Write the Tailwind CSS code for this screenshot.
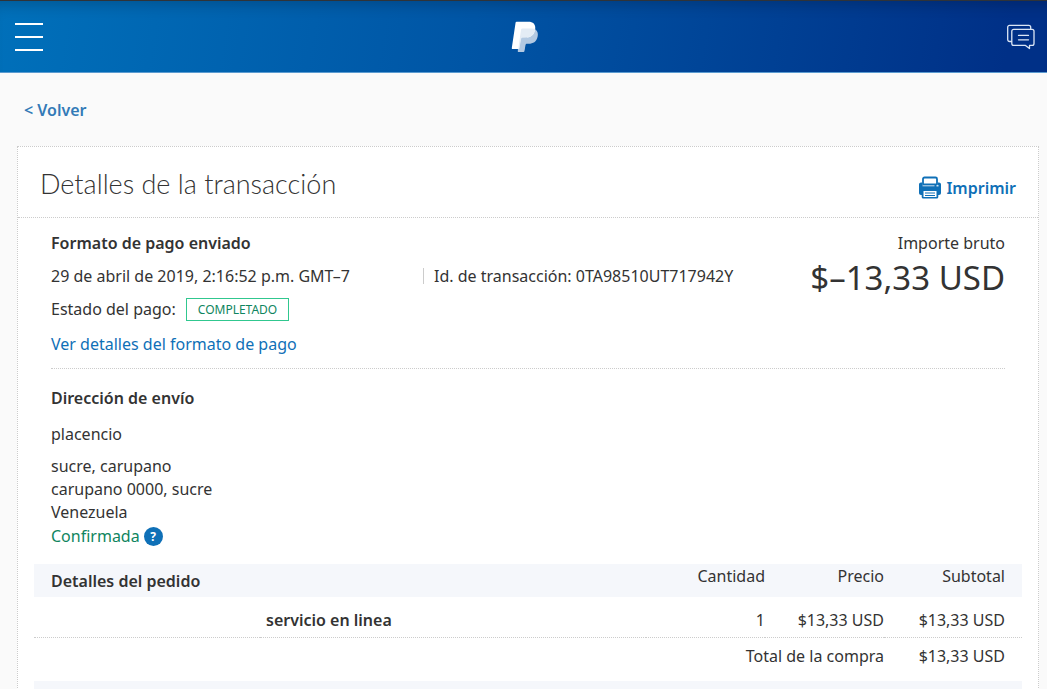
<!doctype html>
<html lang="es">
<head>
  <meta charset="UTF-8">
  <meta name="viewport" content="width=device-width, initial-scale=1.0">
  <script src="https://cdn.jsdelivr.net/npm/@tailwindcss/browser@4"></script>
  <title>Detalles de la transacción</title>
</head>
<body class="bg-[#fafafa] font-['Noto_Sans','Open_Sans',sans-serif] text-base leading-6 text-[#333333]">
  <header class="flex h-[73px] items-center justify-between border-t border-b border-t-[#2f3338] border-b-[#5b9bd0] bg-linear-[100deg,#0070ba,#0055a5_45%,#003087_96%] pl-[15px] pr-3 inset-shadow-[0_14px_14px_-10px_rgb(0_0_0/0.2)]">
    <button type="button" aria-label="Menú" class="flex w-7 cursor-pointer flex-col gap-[11px]">
      <span class="h-[2px] w-full bg-white"></span>
      <span class="h-[2px] w-full bg-white"></span>
      <span class="h-[2px] w-full bg-white"></span>
    </button>
    <a href="#" aria-label="PayPal">
      <svg class="h-8 w-7" viewBox="0 0 28 32" fill="none">
        <path d="M8.500 8.500h16c2.300 1.600 2.800 4.500 2.100 7.200-1.200 5-4.400 7-9 7h-1.800c-.7 0-1.200.5-1.300 1.200l-1.100 6.300c-.1.500-.4.800-.9.800H7.600c-.6 0-.9-.4-.8-1z" fill="#b3c9e2"/>
        <path d="M5.600.7h11.800c4.500 0 7.500 2.500 6.800 7.300-.8 6-4.500 8.700-9.800 8.700h-2.700c-.8 0-1.400.5-1.500 1.300L8.600 27c-.1.600-.5 1-1.100 1H1.600c-.6 0-.9-.5-.8-1L4.600 1.500c.1-.5.5-.8 1-.8z" fill="#fff"/>
        <path d="M10 8.700C10.200 7.900 10.700 7.500 11.500 7.500h9.500c1.200 0 2.200.2 3.200.6-.8 5.900-4.500 8.600-9.800 8.600h-2.700c-.8 0-1.400.5-1.500 1.300L8.600 27l-1.300 1z" fill="#e4ecf5"/>
        <path d="M10.200 16.700h1.500c-.8 0-1.400.5-1.500 1.300L8.600 27l-.7 3.500h4.200c.5 0 .8-.3.900-.8l1.200-6.500c.1-.5.500-.8 1-.8l1-5.900z" fill="#b3c9e2"/>
      </svg>
    </a>
    <button type="button" aria-label="Mensajes" class="cursor-pointer">
      <svg class="h-7 w-7" viewBox="0 0 28 28" fill="none" stroke="#dbe6f5" stroke-width="1.300" stroke-linejoin="round" stroke-linecap="round">
        <path d="M4.500 18.500H2.600a1.900 1.900 0 0 1-1.900-1.900V4.300c0-1.100.8-1.900 1.900-1.900h19.200c1.100 0 1.900.8 1.900 1.900v1.900"/>
        <path d="M6.700 6.300h18.400c1.100 0 1.900.8 1.900 1.900v12.300c0 1.100-.8 1.900-1.900 1.900h-2.600v3.200l-4-3.200H6.700a1.900 1.900 0 0 1-1.900-1.900V8.200c0-1.100.8-1.900 1.900-1.900z"/>
        <path d="M11.500 12.400h10M11.500 16.800h10"/>
      </svg>
    </button>
  </header>

  <main class="pl-[17px] pr-2">
    <nav class="px-[7px] pt-[25px] pb-6">
      <a href="#" class="font-semibold text-[#337ab7]">&lt; Volver</a>
    </nav>

    <div class="border border-b-0 border-dotted border-[#cccccc] bg-white">
      <div class="flex h-[71px] items-center justify-between border-b border-dotted border-[#cccccc] px-[22px] pt-1">
        <h1 class="font-[Lato,sans-serif] text-[27px] leading-9 font-light">Detalles de la transacción</h1>
        <button type="button" class="flex cursor-pointer items-center gap-1 pt-2 font-semibold text-[#0f70b7]">
          <svg class="h-6 w-6" viewBox="0 0 24 24" fill="none">
            <path d="M5 8.500V3a1.500 1.500 0 0 1 1.500-1.500h11A1.500 1.500 0 0 1 19 3v5.500" stroke="#0f70b7" stroke-width="1.800"/>
            <path d="M3 6.500h1v2h16v-2h1c1.100 0 2 .9 2 2v8.500c0 1.100-.9 2-2 2h-.7v2c0 .9-.7 1.500-1.500 1.500H5.200c-.8 0-1.500-.6-1.500-1.500v-2H3c-1.100 0-2-.9-2-2V8.500c0-1.100.9-2 2-2z" fill="#0f70b7"/>
            <path d="M4.500 7.500h15v1.500h-15z" fill="#0f70b7"/>
            <path d="M4.500 9.800h12" stroke="#fff" stroke-width=".8"/>
            <path d="M18.500 9.800h2" stroke="#fff" stroke-width="1.200"/>
            <path d="M5.500 15h13v6h-13z" fill="#fff"/>
            <path d="M7 17h10M7 19.500h10" stroke="#0f70b7" stroke-width="1.200"/>
          </svg>
          Imprimir
        </button>
      </div>

      <div class="px-4 pt-[13px]">
        <section class="mx-[17px] flex justify-between border-b border-dotted border-[#cccccc] pb-3">
          <div>
            <h2 class="font-semibold">Formato de pago enviado</h2>
            <div class="mt-[9px] flex items-center">
              <p class="w-[372px]">29 de abril de 2019, 2:16:52 p.m. GMT–7</p>
              <p class="flex items-center gap-[10px]"><span class="h-4 w-px bg-[#cccccc]"></span>Id. de transacción: 0TA98510UT717942Y</p>
            </div>
            <p class="mt-[9px] flex items-center gap-[10px]">Estado del pago: <span class="border border-[#30c78f] px-[11px] text-[12px] leading-[21px] text-[#0f8560]">COMPLETADO</span></p>
            <p class="mt-[11px]"><a href="#" class="text-[#0f70b7]">Ver detalles del formato de pago</a></p>
          </div>
          <div class="text-right">
            <p>Importe bruto</p>
            <p class="text-[33px] leading-[46px]">$–13,33 USD</p>
          </div>
        </section>

        <section class="mx-[17px] pt-[17px]">
          <h2 class="font-semibold">Dirección de envío</h2>
          <p class="mt-3">placencio</p>
          <address class="mt-[9px] leading-[23px] not-italic">
            sucre, carupano<br>
            carupano 0000, sucre<br>
            Venezuela
          </address>
          <p class="flex items-center gap-1 text-[#0f8560]">Confirmada
            <button type="button" aria-label="Ayuda" class="h-[19px] w-[19px] cursor-pointer rounded-full bg-[#0f70b7] text-[12px] leading-[19px] font-bold text-white">?</button>
          </p>
        </section>

        <table class="mt-4 w-full table-fixed">
          <colgroup>
            <col class="w-[226px]">
            <col>
            <col class="w-[119px]">
            <col class="w-[119px]">
            <col class="w-[138px]">
          </colgroup>
          <thead>
            <tr class="h-[33px] bg-[#f5f7fb] align-top">
              <th class="pt-[5px] pl-[17px] text-left font-semibold" colspan="2">Detalles del pedido</th>
              <th class="text-right font-normal">Cantidad</th>
              <th class="text-right font-normal">Precio</th>
              <th class="pr-[17px] text-right font-normal">Subtotal</th>
            </tr>
          </thead>
          <tbody>
            <tr class="h-10 border-b border-dotted border-[#cccccc] align-top">
              <td></td>
              <td class="pt-[11px] pl-[6px] font-semibold">servicio en linea</td>
              <td class="pt-[11px] text-right">1</td>
              <td class="pt-[11px] text-right">$13,33 USD</td>
              <td class="pt-[11px] pr-[17px] text-right">$13,33 USD</td>
            </tr>
            <tr class="h-11 align-top">
              <td class="pt-[6px] text-right" colspan="4">Total de la compra</td>
              <td class="pt-[6px] pr-[17px] text-right">$13,33 USD</td>
            </tr>
            <tr class="h-[33px] bg-[#f5f7fb]">
              <td colspan="5"></td>
            </tr>
          </tbody>
        </table>
      </div>
    </div>
  </main>
</body>
</html>
